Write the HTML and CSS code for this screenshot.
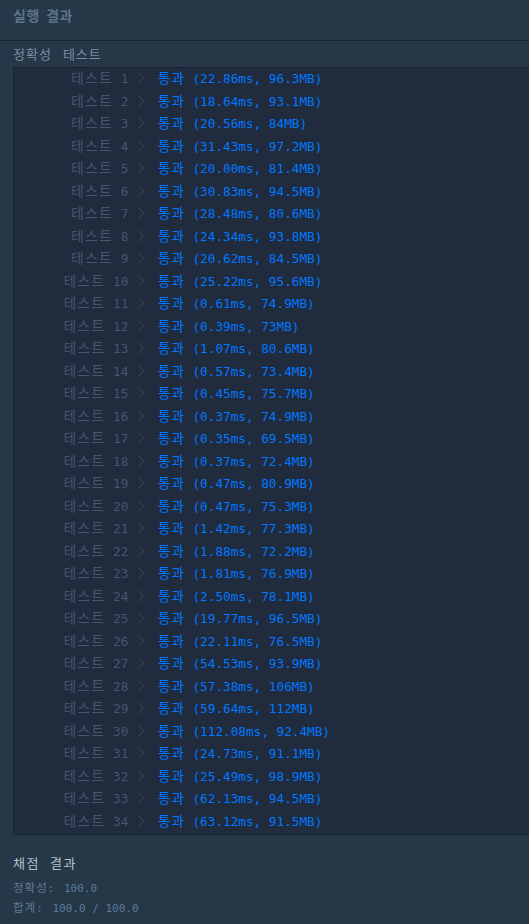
FILE: index.html
```html
<!DOCTYPE html>
<html lang="ko">
<head>
    <meta charset="UTF-8">
    <meta name="viewport" content="width=device-width, initial-scale=1.0">
    <title>실행 결과</title>
    <link rel="stylesheet" href="styles.css">
</head>
<body>
    <div class="header">
        <h2 class="title">실행 결과</h2>
    </div>

    <div class="section">
        <div class="group-title"><span>정확성</span><span>테스트</span></div>
        <div class="console">
            <div class="row"><div class="label"><span class="ko">테스트</span> 1 <svg class="chev" viewBox="0 0 6 12"><polyline points="0.5,0.5 5.5,6 0.5,11.5"/></svg></div><div class="pass"><span class="ko">통과</span> (22.86ms, 96.3MB)</div></div>
            <div class="row"><div class="label"><span class="ko">테스트</span> 2 <svg class="chev" viewBox="0 0 6 12"><polyline points="0.5,0.5 5.5,6 0.5,11.5"/></svg></div><div class="pass"><span class="ko">통과</span> (18.64ms, 93.1MB)</div></div>
            <div class="row"><div class="label"><span class="ko">테스트</span> 3 <svg class="chev" viewBox="0 0 6 12"><polyline points="0.5,0.5 5.5,6 0.5,11.5"/></svg></div><div class="pass"><span class="ko">통과</span> (20.56ms, 84MB)</div></div>
            <div class="row"><div class="label"><span class="ko">테스트</span> 4 <svg class="chev" viewBox="0 0 6 12"><polyline points="0.5,0.5 5.5,6 0.5,11.5"/></svg></div><div class="pass"><span class="ko">통과</span> (31.43ms, 97.2MB)</div></div>
            <div class="row"><div class="label"><span class="ko">테스트</span> 5 <svg class="chev" viewBox="0 0 6 12"><polyline points="0.5,0.5 5.5,6 0.5,11.5"/></svg></div><div class="pass"><span class="ko">통과</span> (20.00ms, 81.4MB)</div></div>
            <div class="row"><div class="label"><span class="ko">테스트</span> 6 <svg class="chev" viewBox="0 0 6 12"><polyline points="0.5,0.5 5.5,6 0.5,11.5"/></svg></div><div class="pass"><span class="ko">통과</span> (30.83ms, 94.5MB)</div></div>
            <div class="row"><div class="label"><span class="ko">테스트</span> 7 <svg class="chev" viewBox="0 0 6 12"><polyline points="0.5,0.5 5.5,6 0.5,11.5"/></svg></div><div class="pass"><span class="ko">통과</span> (28.48ms, 80.6MB)</div></div>
            <div class="row"><div class="label"><span class="ko">테스트</span> 8 <svg class="chev" viewBox="0 0 6 12"><polyline points="0.5,0.5 5.5,6 0.5,11.5"/></svg></div><div class="pass"><span class="ko">통과</span> (24.34ms, 93.8MB)</div></div>
            <div class="row"><div class="label"><span class="ko">테스트</span> 9 <svg class="chev" viewBox="0 0 6 12"><polyline points="0.5,0.5 5.5,6 0.5,11.5"/></svg></div><div class="pass"><span class="ko">통과</span> (20.62ms, 84.5MB)</div></div>
            <div class="row"><div class="label"><span class="ko">테스트</span> 10 <svg class="chev" viewBox="0 0 6 12"><polyline points="0.5,0.5 5.5,6 0.5,11.5"/></svg></div><div class="pass"><span class="ko">통과</span> (25.22ms, 95.6MB)</div></div>
            <div class="row"><div class="label"><span class="ko">테스트</span> 11 <svg class="chev" viewBox="0 0 6 12"><polyline points="0.5,0.5 5.5,6 0.5,11.5"/></svg></div><div class="pass"><span class="ko">통과</span> (0.61ms, 74.9MB)</div></div>
            <div class="row"><div class="label"><span class="ko">테스트</span> 12 <svg class="chev" viewBox="0 0 6 12"><polyline points="0.5,0.5 5.5,6 0.5,11.5"/></svg></div><div class="pass"><span class="ko">통과</span> (0.39ms, 73MB)</div></div>
            <div class="row"><div class="label"><span class="ko">테스트</span> 13 <svg class="chev" viewBox="0 0 6 12"><polyline points="0.5,0.5 5.5,6 0.5,11.5"/></svg></div><div class="pass"><span class="ko">통과</span> (1.07ms, 80.6MB)</div></div>
            <div class="row"><div class="label"><span class="ko">테스트</span> 14 <svg class="chev" viewBox="0 0 6 12"><polyline points="0.5,0.5 5.5,6 0.5,11.5"/></svg></div><div class="pass"><span class="ko">통과</span> (0.57ms, 73.4MB)</div></div>
            <div class="row"><div class="label"><span class="ko">테스트</span> 15 <svg class="chev" viewBox="0 0 6 12"><polyline points="0.5,0.5 5.5,6 0.5,11.5"/></svg></div><div class="pass"><span class="ko">통과</span> (0.45ms, 75.7MB)</div></div>
            <div class="row"><div class="label"><span class="ko">테스트</span> 16 <svg class="chev" viewBox="0 0 6 12"><polyline points="0.5,0.5 5.5,6 0.5,11.5"/></svg></div><div class="pass"><span class="ko">통과</span> (0.37ms, 74.9MB)</div></div>
            <div class="row"><div class="label"><span class="ko">테스트</span> 17 <svg class="chev" viewBox="0 0 6 12"><polyline points="0.5,0.5 5.5,6 0.5,11.5"/></svg></div><div class="pass"><span class="ko">통과</span> (0.35ms, 69.5MB)</div></div>
            <div class="row"><div class="label"><span class="ko">테스트</span> 18 <svg class="chev" viewBox="0 0 6 12"><polyline points="0.5,0.5 5.5,6 0.5,11.5"/></svg></div><div class="pass"><span class="ko">통과</span> (0.37ms, 72.4MB)</div></div>
            <div class="row"><div class="label"><span class="ko">테스트</span> 19 <svg class="chev" viewBox="0 0 6 12"><polyline points="0.5,0.5 5.5,6 0.5,11.5"/></svg></div><div class="pass"><span class="ko">통과</span> (0.47ms, 80.9MB)</div></div>
            <div class="row"><div class="label"><span class="ko">테스트</span> 20 <svg class="chev" viewBox="0 0 6 12"><polyline points="0.5,0.5 5.5,6 0.5,11.5"/></svg></div><div class="pass"><span class="ko">통과</span> (0.47ms, 75.3MB)</div></div>
            <div class="row"><div class="label"><span class="ko">테스트</span> 21 <svg class="chev" viewBox="0 0 6 12"><polyline points="0.5,0.5 5.5,6 0.5,11.5"/></svg></div><div class="pass"><span class="ko">통과</span> (1.42ms, 77.3MB)</div></div>
            <div class="row"><div class="label"><span class="ko">테스트</span> 22 <svg class="chev" viewBox="0 0 6 12"><polyline points="0.5,0.5 5.5,6 0.5,11.5"/></svg></div><div class="pass"><span class="ko">통과</span> (1.88ms, 72.2MB)</div></div>
            <div class="row"><div class="label"><span class="ko">테스트</span> 23 <svg class="chev" viewBox="0 0 6 12"><polyline points="0.5,0.5 5.5,6 0.5,11.5"/></svg></div><div class="pass"><span class="ko">통과</span> (1.81ms, 76.9MB)</div></div>
            <div class="row"><div class="label"><span class="ko">테스트</span> 24 <svg class="chev" viewBox="0 0 6 12"><polyline points="0.5,0.5 5.5,6 0.5,11.5"/></svg></div><div class="pass"><span class="ko">통과</span> (2.50ms, 78.1MB)</div></div>
            <div class="row"><div class="label"><span class="ko">테스트</span> 25 <svg class="chev" viewBox="0 0 6 12"><polyline points="0.5,0.5 5.5,6 0.5,11.5"/></svg></div><div class="pass"><span class="ko">통과</span> (19.77ms, 96.5MB)</div></div>
            <div class="row"><div class="label"><span class="ko">테스트</span> 26 <svg class="chev" viewBox="0 0 6 12"><polyline points="0.5,0.5 5.5,6 0.5,11.5"/></svg></div><div class="pass"><span class="ko">통과</span> (22.11ms, 76.5MB)</div></div>
            <div class="row"><div class="label"><span class="ko">테스트</span> 27 <svg class="chev" viewBox="0 0 6 12"><polyline points="0.5,0.5 5.5,6 0.5,11.5"/></svg></div><div class="pass"><span class="ko">통과</span> (54.53ms, 93.9MB)</div></div>
            <div class="row"><div class="label"><span class="ko">테스트</span> 28 <svg class="chev" viewBox="0 0 6 12"><polyline points="0.5,0.5 5.5,6 0.5,11.5"/></svg></div><div class="pass"><span class="ko">통과</span> (57.38ms, 106MB)</div></div>
            <div class="row"><div class="label"><span class="ko">테스트</span> 29 <svg class="chev" viewBox="0 0 6 12"><polyline points="0.5,0.5 5.5,6 0.5,11.5"/></svg></div><div class="pass"><span class="ko">통과</span> (59.64ms, 112MB)</div></div>
            <div class="row"><div class="label"><span class="ko">테스트</span> 30 <svg class="chev" viewBox="0 0 6 12"><polyline points="0.5,0.5 5.5,6 0.5,11.5"/></svg></div><div class="pass"><span class="ko">통과</span> (112.08ms, 92.4MB)</div></div>
            <div class="row"><div class="label"><span class="ko">테스트</span> 31 <svg class="chev" viewBox="0 0 6 12"><polyline points="0.5,0.5 5.5,6 0.5,11.5"/></svg></div><div class="pass"><span class="ko">통과</span> (24.73ms, 91.1MB)</div></div>
            <div class="row"><div class="label"><span class="ko">테스트</span> 32 <svg class="chev" viewBox="0 0 6 12"><polyline points="0.5,0.5 5.5,6 0.5,11.5"/></svg></div><div class="pass"><span class="ko">통과</span> (25.49ms, 98.9MB)</div></div>
            <div class="row"><div class="label"><span class="ko">테스트</span> 33 <svg class="chev" viewBox="0 0 6 12"><polyline points="0.5,0.5 5.5,6 0.5,11.5"/></svg></div><div class="pass"><span class="ko">통과</span> (62.13ms, 94.5MB)</div></div>
            <div class="row"><div class="label"><span class="ko">테스트</span> 34 <svg class="chev" viewBox="0 0 6 12"><polyline points="0.5,0.5 5.5,6 0.5,11.5"/></svg></div><div class="pass"><span class="ko">통과</span> (63.12ms, 91.5MB)</div></div>
        </div>
    </div>

    <div class="summary">
        <h4 class="summary-title"><span>채점</span><span>결과</span></h4>
        <p class="score"><span class="ko">정확성</span>: <span class="num">100.0</span></p>
        <p class="score"><span class="ko">합계</span>: <span class="num">100.0 / 100.0</span></p>
    </div>
</body>
</html>
```

FILE: styles.css
```css
/* Global */
body {
    margin: 0;
    padding: 0;
    background-color: #263747;
    font-family: 'DejaVu Sans Mono', 'Noto Sans CJK KR', monospace;
    color: #44576c;
    overflow: hidden;
}

.ko {
    font-family: 'Noto Sans CJK KR', sans-serif;
    font-size: 13.5px;
    letter-spacing: 1px;
    line-height: 1;
}

/* Header */
.header {
    height: 41px;
    border-bottom: 1px solid #172334;
    box-sizing: border-box;
}

.title {
    margin: 0;
    padding: 5px 13px 0;
    font-family: 'Noto Sans CJK KR', sans-serif;
    font-size: 14px;
    font-weight: bold;
    line-height: 20px;
    color: #5c7389;
    letter-spacing: 0.5px;
    word-spacing: 2px;
}

/* Test list */
.section {
    padding: 0 0 0 13px;
}

.group-title {
    display: flex;
    gap: 11px;
    height: 26px;
    font-family: 'Noto Sans CJK KR', sans-serif;
    font-size: 13px;
    line-height: 25px;
    color: #7a8ea3;
    letter-spacing: 1px;
}

.console {
    background-color: #202b3d;
    border: 1px solid #172334;
    border-right: none;
    padding: 0 0 1px;
}

.row {
    display: flex;
    height: 22.5px;
    line-height: 22.5px;
    font-size: 12.7px;
    white-space: nowrap;
}

.label {
    width: 130px;
    text-align: right;
    color: #44576c;
}

.label .ko {
    letter-spacing: 1.5px;
}

.chev {
    width: 6px;
    height: 12px;
    margin-left: 2px;
    vertical-align: -1px;
    fill: none;
    stroke: #3a4b5e;
    stroke-width: 1;
}

.pass {
    padding-left: 14px;
    color: #0078ff;
}

/* Summary */
.summary {
    padding: 16px 13px 0;
}

.summary-title {
    display: flex;
    gap: 10px;
    margin: 0 0 4px;
    font-family: 'Noto Sans CJK KR', sans-serif;
    font-size: 13px;
    font-weight: normal;
    line-height: 24px;
    color: #b2c0cc;
    letter-spacing: 1.5px;
}

.score {
    margin: 0;
    font-size: 11px;
    line-height: 20px;
    color: #5f7a90;
}

.score .ko {
    font-size: 11.5px;
}

.score .num {
    color: #5a7b99;
    margin-left: 3px;
}
```
